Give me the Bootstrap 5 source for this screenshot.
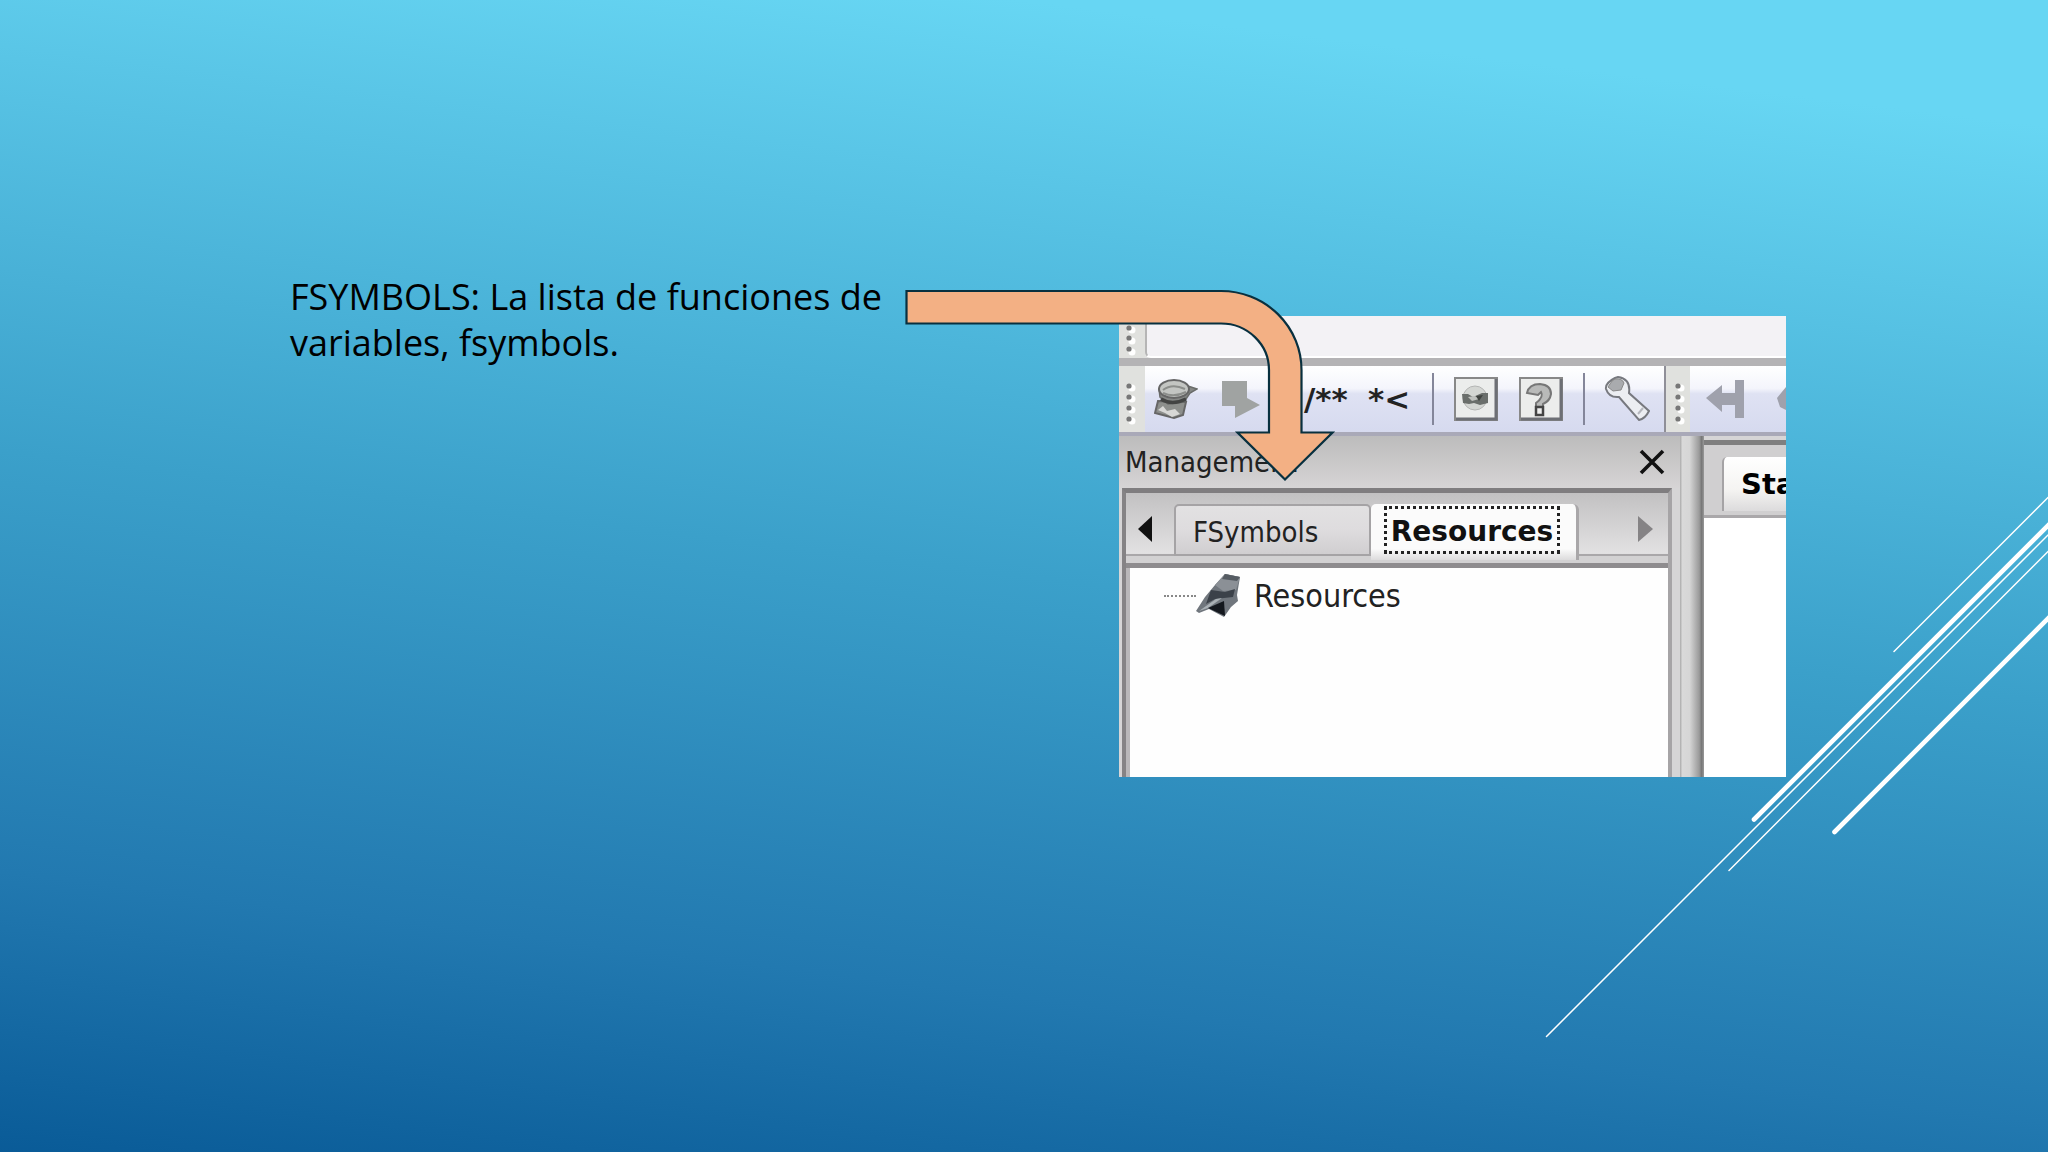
<!DOCTYPE html>
<html lang="es">
<head>
<meta charset="utf-8">
<meta name="viewport" content="width=device-width, initial-scale=1">
<title>FSymbols</title>
<link rel="stylesheet" href="https://cdn.jsdelivr.net/npm/bootstrap@5.3.0/dist/css/bootstrap.min.css">
<style>
.slide{background:linear-gradient(187deg,#67d6f3 9%,#3ba0ca 50%,#2279b0 80%,#075895 102%);padding-left:290px;color:#000}
.slide-text{font-family:"Open Sans","Noto Sans",sans-serif;font-size:36px;line-height:46px;width:610px;padding-top:274px}
.rays{right:0;top:490px;width:512px;height:560px}
.figure-wrap{width:667px;margin-left:219px;padding-top:316px}
.flow-arrow{left:-216px;top:286px;width:436px;height:200px}
.ide{font-family:"DejaVu Sans Condensed","DejaVu Sans",sans-serif;font-size:29px;line-height:34px;background:#d6d5d6;color:#222}
.ide button{background:none;border:0;padding:0;color:inherit;flex:none}
.ide svg{display:block}
.top-strip{height:50px;border-bottom:8px solid #b4b3b5;background:#e2e2e1}
.top-field{background:#f3f2f5;border-left:2px solid #b5b5b5;border-bottom:2px solid #fff;border-radius:0 0 0 6px}
.grip{width:26px;background:#e0e1de;flex:none}
.tools{height:70px;background:linear-gradient(#fff,#f4f5fc 34%,#dfe2f3 42%,#d6daef);border-bottom:4px solid #a9a9b8}
.tool-set{gap:19px;padding-left:9px;width:519px;flex:none}
.tool-sep{width:2px;height:52px;background:#84869a;flex:none}
.code-mark{font-family:"DejaVu Sans",sans-serif;font-weight:700;font-size:31px;width:45px;text-align:left;white-space:nowrap}
.code-gap{margin-left:24px!important}
.grip-b{border-left:2px solid #8f8f98}
.pane-side{width:561px;flex:none}
.pane-title{height:52px;padding:0 14px 0 6px;background:linear-gradient(#bcbcbc,#d6d4d5)}
.pane-box{border-left:4px solid #858385;border-top:5px solid #7f7d7f;border-right:4px solid #a6a4a6;margin:0 8px 0 3px}
.tab-row{height:75px;background:linear-gradient(#c2c1c2,#e2e1e2 86%,#d2d1d2 90%);border-bottom:5px solid #8e8c8e;padding-top:11px}
.tab-scroll{width:48px;height:52px;border-bottom:2px solid #a9a7a9!important}
.tab-fill{height:52px;border-bottom:2px solid #a9a7a9;padding-right:14px}
.tab-off{width:197px;height:52px;text-align:left!important;background:linear-gradient(#e2e1e2,#dedcde 50%,#d0ced0)!important;border:2px solid #a5a3a5!important;border-radius:5px 5px 0 0!important;padding:4px 0 0 17px!important}
.tab-on{width:208px;height:56px;background:linear-gradient(#fbfbfb 80%,#dcdbdc)!important;border-radius:5px 6px 0 0!important;border-right:3px solid #a9a7a9!important;padding:2px 0 0 13px!important;text-align:left!important}
.focus-box{font-family:"DejaVu Sans",sans-serif;font-weight:700;font-size:28px;width:176px;height:48px;line-height:46px;border:3px dotted #222;text-align:center;color:#111}
.tree{background:#fefefe;height:209px;border-left:4px solid #b9b7b9;padding:5px 0 0 34px}
.tree-name{font-size:32px;line-height:44px;padding-left:12px}
.tree-dots{width:32px;border-top:2px dotted #888}
.splitter{width:24px;flex:none;background:linear-gradient(90deg,#aaa 0,#d9d9d9 10%,#d6d6d6 40%,#b8b8b8 60%,#9a9a9a 80%,#777 90%,#999)}
.pane-edit{margin-top:4px;border-top:5px solid #7f7f7f}
.edit-tabs{height:73px;background:#d0cfd0;border-bottom:3px solid #aaa8aa;padding:12px 0 0 18px}
.edit-tab{width:64px;height:54px;background:linear-gradient(#fff,#f5f4f2 60%,#dcdbdc)!important;border-left:2px solid #a5a3a5!important;border-radius:5px 0 0 0!important;padding-left:17px!important;font-family:"DejaVu Sans",sans-serif;font-weight:700;font-size:29px;text-align:left;color:#000!important}
</style>
<script src="https://cdn.jsdelivr.net/npm/bootstrap@5.3.0/dist/js/bootstrap.bundle.min.js"></script>
</head>
<body>
<main class="slide min-vh-100 position-relative overflow-hidden d-flex align-items-start">
  <svg class="rays position-absolute" viewBox="1536 490 512 560" fill="none" stroke="#fff" stroke-linecap="round" aria-hidden="true">
    <g stroke-width="1.5"><path d="M1894 651.5 2052 493.5M1546.500 1036.500 2052 531M1729 870.500 2052 547.500"/></g>
    <g stroke-width="4.600"><path d="M1754 819.500 2052 521.500M1834.500 832 2052 614.500"/></g>
  </svg>

  <p class="slide-text mb-0 flex-shrink-0">FSYMBOLS: La lista de funciones de variables, fsymbols.</p>

  <div class="figure-wrap position-relative flex-shrink-0">
    <section class="ide overflow-hidden" aria-label="Management">
      <div class="top-strip d-flex">
        <div class="grip"><svg width="26" height="42"><g fill="#fff"><circle cx="13" cy="14" r="3.500"/><circle cx="13" cy="25" r="3.500"/><circle cx="13" cy="36" r="3.500"/></g><g fill="#777"><circle cx="10" cy="12" r="2.600"/><circle cx="10" cy="22" r="2.600"/><circle cx="10" cy="33" r="2.600"/></g></svg></div>
        <div class="top-field flex-grow-1"></div>
      </div>

      <div class="tools d-flex">
        <div class="grip"><svg width="26" height="66"><g fill="#fff"><circle cx="13" cy="22" r="3.500"/><circle cx="13" cy="33" r="3.500"/><circle cx="13" cy="44" r="3.500"/><circle cx="13" cy="55" r="3.500"/></g><g fill="#777"><circle cx="10" cy="20" r="2.600"/><circle cx="10" cy="31" r="2.600"/><circle cx="10" cy="42" r="2.600"/><circle cx="10" cy="53" r="2.600"/></g></svg></div>
        <div class="tool-set d-flex align-items-center">
          <button type="button" aria-label="Build"><svg width="44" height="44" viewBox="0 0 44 44">
            <path d="M4 24 32 25 29 38 20 41 1 36Z" fill="#8d8f8c" stroke="#666" stroke-width="2"/>
            <path d="m4 33 5-4 4 5 8-2 5 5-8 3-7-4Z" fill="#d8d8d6"/>
            <path d="M5 12 6 20 14 27 30 25 36 16 43 12 34 9Z" fill="#858785" stroke="#6a6c6a" stroke-width="1.500"/>
            <ellipse cx="20" cy="12" rx="15" ry="9" fill="#c3c5c2" stroke="#666" stroke-width="2"/>
            <path d="M9 13Q18 6 31 12M9 16Q20 21 32 15" fill="none" stroke="#8c8e8b" stroke-width="2"/>
            <path d="M7 22Q18 29 32 22" fill="none" stroke="#434443" stroke-width="3.500"/>
          </svg></button>
          <button type="button" aria-label="Run"><svg width="44" height="44" viewBox="0 0 44 44"><path d="M5 4H30V21L43 28 18 41V29H5Z" fill="#a0a3a2"/></svg></button>
          <button type="button" class="code-mark code-gap">/**</button>
          <button type="button" class="code-mark">*&lt;</button>
          <span class="tool-sep"></span>
          <button type="button" aria-label="Disc"><svg width="46" height="46" viewBox="0 0 46 46">
            <path d="M2 2H44V44H2Z" fill="#ecedec" stroke="#888" stroke-width="2"/><path d="M43 3V43H3" fill="none" stroke="#6d6f75" stroke-width="3"/>
            <circle cx="22" cy="22" r="12" fill="#d4d6d3" stroke="#b5b6b5"/>
            <path d="M9 18 15 18 20 21 29 17 35 17 35 27 27 29 21 27 16 28 10 27Z" fill="#6a6e6b"/><path d="m15 21 4 4 7-2-4-3Z" fill="#bfc1be"/><path d="m23 20 7-1-4 6Z" fill="#3f423f"/>
          </svg></button>
          <button type="button" aria-label="Help"><svg width="46" height="46" viewBox="0 0 46 46">
            <path d="M2 2H44V44H2Z" fill="#ecedec" stroke="#888" stroke-width="2"/><path d="M43 3V43H3" fill="none" stroke="#6d6f75" stroke-width="3"/>
            <path d="M9 17Q11 8 22 8 33 9 33 18 32 25 25 28V31H18V27Q26 21 23 16L20 19Z" fill="#b9bab9" stroke="#777" stroke-width="2"/>
            <path d="M18 31H25V39H18Z" fill="#eee" stroke="#444" stroke-width="2.500"/>
          </svg></button>
          <span class="tool-sep"></span>
          <button type="button" aria-label="Settings"><svg width="46" height="46" viewBox="0 0 46 46">
            <path d="M11 2Q1 7 2 13 5 22 15 21L35 44Q41 43 45 35L25 17Q27 3 14 1Z" fill="#eceef2" stroke="#77797f" stroke-width="2"/>
            <path d="M11 3Q18 2 20 7L17 14 9 15 4 11 8 5Z" fill="#a9abae" stroke="#888" stroke-width="1"/><path d="m34 38 5-6" stroke="#b5b7bd" stroke-width="2"/>
          </svg></button>
        </div>
        <div class="grip grip-b"><svg width="26" height="66"><g fill="#fff"><circle cx="15" cy="22" r="3.500"/><circle cx="15" cy="33" r="3.500"/><circle cx="15" cy="44" r="3.500"/><circle cx="15" cy="55" r="3.500"/></g><g fill="#777"><circle cx="12" cy="20" r="2.600"/><circle cx="12" cy="31" r="2.600"/><circle cx="12" cy="42" r="2.600"/><circle cx="12" cy="53" r="2.600"/></g></svg></div>
        <div class="d-flex align-items-center ps-3"><button type="button" aria-label="Back"><svg width="80" height="44" viewBox="0 0 80 44"><path d="M0 21 16 8V16H29V3H38V41H29V28H16V35ZM71 21 80 10V33L74 30Z" fill="#9fa1ac"/></svg></button></div>
      </div>

      <div class="d-flex">
        <div class="pane-side">
          <div class="pane-title d-flex align-items-center justify-content-between">
            <span>Management</span>
            <button type="button" aria-label="Close"><svg width="28" height="26" viewBox="0 0 28 26"><path d="M3 2 25 24M25 2 3 24" stroke="#111" stroke-width="3.600"/></svg></button>
          </div>
          <div class="pane-box">
            <div class="tab-row d-flex">
              <button type="button" class="tab-scroll" aria-label="Previous tab"><svg width="48" height="28" viewBox="0 0 48 28"><path d="M26 1V27L12 14Z" fill="#111"/></svg></button>
              <button type="button" class="tab-off">FSymbols</button>
              <button type="button" class="tab-on d-flex align-items-start"><span class="focus-box d-block">Resources</span></button>
              <div class="tab-fill flex-grow-1 d-flex align-items-center justify-content-end"><button type="button" aria-label="Next tab"><svg width="16" height="26" viewBox="0 0 16 26"><path d="M0 0V26L15 13Z" fill="#858385"/></svg></button></div>
            </div>
            <div class="tree"><div class="d-flex align-items-center">
              <span class="tree-dots"></span>
              <svg width="46" height="46" viewBox="0 0 46 46"><path d="M0 38 9 24 19 12 29 1 44 4 41 22 42 28 35 34 28 44 13 36 3 40Z" fill="#70767d"/><path d="m19 12 10-11 15 3-4 13-13 1Z" fill="#8b9096"/><path d="m29 1 15 3-3 4-15-2Z" fill="#565c63"/><path d="m15 17 14 2 10-3-2 8-9 1-9 1-9 5Z" fill="#3b4149"/><path d="M3 38 20 26 26 25 12 35Z" fill="#a9b0b5"/><path d="m12 35 16-7 1 15Z" fill="#14181e"/></svg>
              <span class="tree-name">Resources</span>
            </div></div>
          </div>
        </div>
        <div class="splitter"></div>
        <div class="pane-edit flex-grow-1 bg-white overflow-hidden">
          <div class="edit-tabs"><button type="button" class="edit-tab">Sta</button></div>
        </div>
      </div>
    </section>

    <svg class="flow-arrow position-absolute" viewBox="903 286 436 200" aria-hidden="true"><path d="M906.500 291H1221A80.500 79 0 0 1 1301.500 370V432.500H1332.500L1285 479.500 1237.500 432.500H1269V370A48 46.500 0 0 0 1221 323.500H906.500Z" fill="#f3b084" stroke="#08303f" stroke-width="2.200"/></svg>
  </div>
</main>
</body>
</html>
